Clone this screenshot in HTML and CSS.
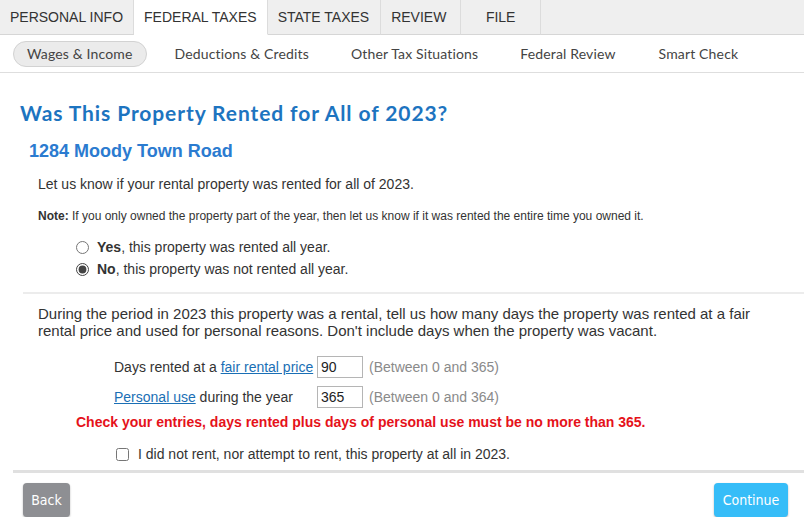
FILE: index.html
```html
<!DOCTYPE html>
<html lang="en">
<head>
    <meta charset="UTF-8">
    <title>Was This Property Rented for All of 2023?</title>
    <link rel="stylesheet" href="styles.css">
</head>
<body>
    <!-- Main tabs -->
    <nav class="tabs">
        <div class="tab">PERSONAL INFO</div>
        <div class="tab active">FEDERAL TAXES</div>
        <div class="tab">STATE TAXES</div>
        <div class="tab">REVIEW</div>
        <div class="tab tab-file">FILE</div>
        <div class="tab-fill"></div>
    </nav>

    <!-- Sub navigation -->
    <nav class="subnav">
        <span class="pill">Wages &amp; Income</span>
        <span class="sub-item">Deductions &amp; Credits</span>
        <span class="sub-item">Other Tax Situations</span>
        <span class="sub-item">Federal Review</span>
        <span class="sub-item">Smart Check</span>
    </nav>

    <main class="page">
        <h1>Was This Property Rented for All of 2023?</h1>
        <h2>1284 Moody Town Road</h2>

        <section class="question">
            <p class="intro">Let us know if your rental property was rented for all of 2023.</p>
            <p class="note"><strong>Note:</strong> If you only owned the property part of the year, then let us know if it was rented the entire time you owned it.</p>

            <div class="choices">
                <label class="choice"><input type="radio" name="rented"> <span><strong>Yes</strong>, this property was rented all year.</span></label>
                <label class="choice"><input type="radio" name="rented" checked> <span><strong>No</strong>, this property was not rented all year.</span></label>
            </div>
        </section>

        <section class="days">
            <p class="explain">During the period in 2023 this property was a rental, tell us how many days the property was rented at a fair rental price and used for personal reasons. Don't include days when the property was vacant.</p>

            <div class="field">
                <span class="field-label">Days rented at a <a href="#">fair rental price</a></span>
                <input type="text" value="90">
                <span class="range">(Between 0 and 365)</span>
            </div>
            <div class="field">
                <span class="field-label"><a href="#">Personal use</a> during the year</span>
                <input type="text" value="365">
                <span class="range">(Between 0 and 364)</span>
            </div>

            <p class="error">Check your entries, days rented plus days of personal use must be no more than 365.</p>

            <label class="check"><input type="checkbox"> <span>I did not rent, nor attempt to rent, this property at all in 2023.</span></label>
        </section>

        <footer class="actions">
            <button class="btn btn-back">Back</button>
            <button class="btn btn-continue">Continue</button>
        </footer>
    </main>
</body>
</html>
```

FILE: styles.css
```css
body {
    margin: 0;
    background-color: #ffffff;
    color: #333;
    font-family: 'Liberation Sans', Arial, sans-serif;
}

/* Top tabs */
.tabs {
    display: flex;
    height: 35px;
    background-color: #efefef;
}

.tab {
    display: flex;
    align-items: center;
    padding: 0 10px;
    font-size: 14px;
    color: #333;
    border-right: 1px solid #dcdcdc;
    border-bottom: 1px solid #d6d6d6;
}

.tab.active {
    background-color: #ffffff;
    border-bottom-color: #ffffff;
}

.tab:nth-child(3) {
    padding: 0 11px 0 10px;
}

.tab:nth-child(4) {
    padding: 0 11px 0 10px;
    width: 58px;
}

.tab-file {
    width: 59px;
    justify-content: center;
}

.tab-fill {
    flex: 1;
    border-bottom: 1px solid #d6d6d6;
}

/* Sub navigation */
.subnav {
    display: flex;
    align-items: center;
    height: 37px;
    padding-left: 13px;
    border-bottom: 1px solid #dedede;
    font-family: Lato, 'Open Sans', sans-serif;
    font-size: 14px;
    letter-spacing: 0.15px;
    color: #444;
}

.pill {
    padding: 3px 13px 4px;
    background-color: #ebebeb;
    border: 1px solid #d2d2d2;
    border-radius: 13px;
    margin-right: 28px;
}

.sub-item {
    margin-right: 42px;
}

.sub-item:nth-child(4) {
    margin-right: 43px;
}

/* Page */
.page {
    padding: 0 0 0 20px;
}

h1 {
    margin: 27px 0 0;
    font-family: Lato, 'Open Sans', sans-serif;
    font-size: 21px;
    font-weight: 700;
    color: #1d74c0;
    letter-spacing: 0.9px;
}

h2 {
    margin: 16px 0 0 9px;
    font-size: 18px;
    font-weight: bold;
    color: #2b7bd0;
}

.question {
    margin-left: 3px;
    padding-left: 15px;
    border-bottom: 2px solid #ececec;
}

.intro {
    margin: 14px 0 0;
    font-size: 14px;
}

.note {
    margin: 17px 0 0;
    font-size: 12px;
    color: #333;
}

.choices {
    padding: 16px 0 15px 38px;
    display: flex;
    flex-direction: column;
    gap: 6px;
}

.choice {
    display: flex;
    align-items: center;
    font-size: 14px;
}

.choice input {
    margin: 0 8px 0 0;
    width: 13px;
    height: 13px;
    accent-color: #444;
}

/* Days section */
.days {
    padding-left: 18px;
}

.explain {
    margin: 11px 0 0;
    font-size: 15px;
    line-height: 17px;
    padding-right: 20px;
}

.field {
    display: flex;
    align-items: center;
    margin: 17px 0 0 76px;
    font-size: 14px;
}

.field + .field {
    margin-top: 8px;
}

.field-label {
    width: 203px;
}

.field a {
    color: #1a6fb5;
}

.field input {
    width: 38px;
    height: 18px;
    padding: 1px 3px;
    border: 1px solid #b5b5b5;
    font-family: 'Liberation Sans', Arial, sans-serif;
    font-size: 14px;
    color: #222;
    margin-right: 6px;
}

.range {
    color: #8a8a8a;
}

.error {
    margin: 6px 0 0 38px;
    font-size: 14px;
    font-weight: bold;
    color: #e5121a;
}

.check {
    display: flex;
    align-items: center;
    margin: 16px 0 0 78px;
    padding-bottom: 8px;
    font-size: 14px;
}

.check input {
    margin: 0 9px 0 0;
    width: 13px;
    height: 13px;
}

/* Footer buttons */
.actions {
    display: flex;
    justify-content: space-between;
    margin-left: -7px;
    padding: 10px 16px 0 10px;
    border-top: 3px solid #e0e0e0;
}

.btn {
    height: 34px;
    padding: 0;
    border: none;
    border-radius: 4px;
    color: #ffffff;
    font-family: 'Liberation Sans Narrow', 'DejaVu Sans', sans-serif;
    font-stretch: condensed;
    font-size: 14px;
    box-shadow: 0 1px 2px rgba(0, 0, 0, 0.3);
}

.btn-back {
    width: 47px;
    background-color: #8e8f93;
}

.btn-continue {
    width: 74px;
    background-color: #36bdf8;
}
```
